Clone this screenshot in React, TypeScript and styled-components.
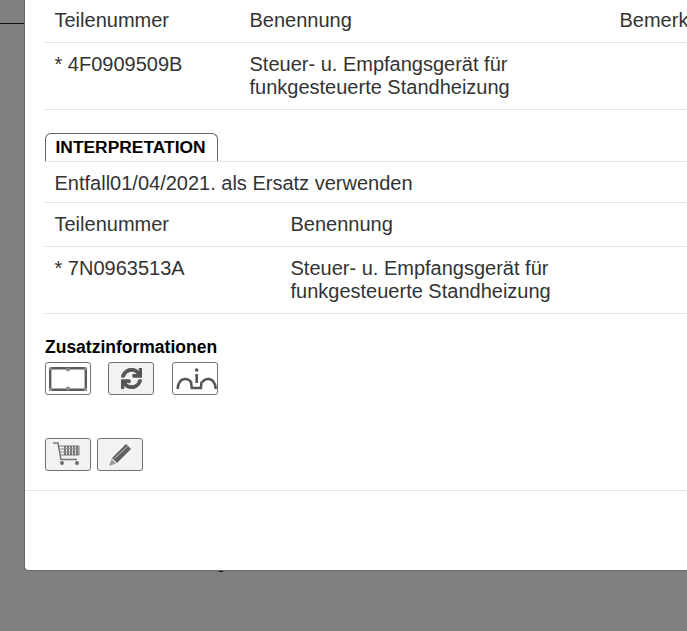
import React from "react";
import styled, { createGlobalStyle } from "styled-components";
import { FaSync } from "react-icons/fa";

const GlobalStyle = createGlobalStyle`
  html, body {
    margin: 0;
    padding: 0;
    height: 100%;
    overflow: hidden;
    background: #808080;
    font-family: "Liberation Sans", Arial, sans-serif;
  }
`;

const Backdrop = styled.div`
  position: relative;
  height: 631px;
  overflow: hidden;
  background: #808080;
`;

const TopBar = styled.div`
  height: 23px;
  border-bottom: 1px solid #111;
`;

const HiddenText = styled.div`
  padding: 527px 0 0 216px;
  font-size: 18px;
  line-height: 22px;
  color: #111;
`;

const Modal = styled.div`
  position: absolute;
  left: 25px;
  top: 0;
  width: 760px;
  height: 571px;
  box-sizing: border-box;
  padding: 0 0 0 20px;
  background: #fff;
  border-left: 1px solid #666;
  border-bottom: 1px solid #666;
  margin-left: -1px;
  border-bottom-left-radius: 5px;
  color: #333;
`;

const Table = styled.div`
  display: flex;
  flex-direction: column;
`;

const Row = styled.div<{ $first: string; $second: string; $height: number; $top: number }>`
  display: grid;
  grid-template-columns: ${(p) => p.$first} ${(p) => p.$second} 1fr;
  height: ${(p) => p.$height}px;
  box-sizing: border-box;
  padding: ${(p) => p.$top}px 0 0 9.5px;
  border-bottom: 1px solid #e3e3e3;
  font-size: 20px;
  line-height: 23px;
`;

const Tab = styled.div`
  width: 173px;
  height: 28px;
  box-sizing: border-box;
  margin: 23px 0 0 0;
  padding-left: 9.5px;
  border: 1px solid #666;
  border-bottom: none;
  border-radius: 6px 6px 0 0;
  font-size: 17.4px;
  font-weight: 700;
  line-height: 26px;
  color: #000;
`;

const TabPanel = styled.div`
  border-top: 1px solid #e3e3e3;
`;

const Note = styled.div`
  height: 41px;
  box-sizing: border-box;
  padding: 10px 0 0 9.5px;
  border-bottom: 1px solid #e3e3e3;
  font-size: 20px;
  line-height: 23px;
`;

const SectionTitle = styled.div`
  margin-top: 23px;
  font-size: 17.5px;
  font-weight: 700;
  line-height: 20px;
  color: #000;
`;

const ButtonRow = styled.div<{ $gap: number; $top: number }>`
  display: flex;
  gap: ${(p) => p.$gap}px;
  margin-top: ${(p) => p.$top}px;
`;

const IconButton = styled.button<{ $active?: boolean }>`
  width: 46px;
  height: 33px;
  padding: 0;
  display: flex;
  align-items: center;
  justify-content: center;
  box-sizing: border-box;
  background: ${(p) => (p.$active ? "#fff" : "#f1f3f2")};
  border: 1px solid #707070;
  border-radius: 3px;
  color: #555;
`;

const Divider = styled.div`
  margin: 19px 0 0 -20px;
  border-top: 1px solid #e3e3e3;
`;

const FrameIcon = () => (
  <svg width="38" height="24" viewBox="0 0 38 24">
    <rect x="1.200" y="1.200" width="35.600" height="21.600" rx="1" fill="none" stroke="#5a5a5a" strokeWidth="2.400" />
    <g fill="#8a8a8a">
      <circle cx="1.700" cy="1.700" r="1.700" />
      <circle cx="36.300" cy="1.700" r="1.700" />
      <circle cx="1.700" cy="22.300" r="1.700" />
      <circle cx="36.300" cy="22.300" r="1.700" />
      <circle cx="19" cy="2.500" r="2" />
      <circle cx="19" cy="21.500" r="2" />
    </g>
  </svg>
);

const AxleInfoIcon = () => (
  <svg width="44" height="31" viewBox="1 1 44 31" fill="none" stroke="#555" strokeWidth="2.500">
    <path d="M5.700 27c0-5.800 3.300-10 7.500-10 2.500 0 4.500 1.100 5.800 3" />
    <path d="M43.700 27c0-5.800-3.300-10-7.500-10-2.500 0-4.500 1.100-5.800 3" />
    <path d="M19 19.500l.7 6.500h9.200l.7-6.500" />
    <path d="M24.700 12v9" strokeWidth="2.600" />
    <circle cx="24.700" cy="8" r="1.800" fill="#555" stroke="none" />
  </svg>
);

const CartIcon = () => (
  <svg width="32" height="28" viewBox="0 0 32 28" fill="none" stroke="#777">
    <path d="M1 2h5l3 16.500h16" strokeWidth="1.500" />
    <path d="M7 5h20v9H9" strokeWidth="1" />
    <path d="M13 5v9M16 5v9M19 5v9M22 5v9M25 5v9" stroke="#666" strokeWidth="1.700" />
    <path d="M8 8h19M8.500 11h18.500" stroke="#888" strokeWidth="1" />
    <circle cx="10" cy="22" r="1.900" fill="#666" stroke="none" />
    <circle cx="25" cy="22" r="1.900" fill="#666" stroke="none" />
  </svg>
);

const PencilIcon = () => (
  <svg width="26" height="26" viewBox="0 0 26 26" fill="#5f5f5f">
    <path d="M19 2l5 5L10 21l-5-5z" />
    <path d="M4.500 17l4.500 4.500L2 24z" fill="#999" />
    <path d="M7.500 16.500L20.500 4.500" stroke="#f1f3f2" strokeWidth="0.700" fill="none" />
  </svg>
);

export default function App() {
  return (
    <>
      <GlobalStyle />
      <Backdrop>
        <TopBar />
        <HiddenText>g</HiddenText>
        <Modal>
          <Table>
            <Row $first="195px" $second="370px" $height={43} $top={9}>
              <span>Teilenummer</span>
              <span>Benennung</span>
              <span>Bemerkung</span>
            </Row>
            <Row $first="195px" $second="370px" $height={67} $top={10}>
              <span>* 4F0909509B</span>
              <span>
                Steuer- u. Empfangsgerät für
                <br />
                funkgesteuerte Standheizung
              </span>
            </Row>
          </Table>
          <Tab>INTERPRETATION</Tab>
          <TabPanel>
            <Note>Entfall01/04/2021. als Ersatz verwenden</Note>
            <Table>
              <Row $first="236px" $second="370px" $height={44} $top={10}>
                <span>Teilenummer</span>
                <span>Benennung</span>
              </Row>
              <Row $first="236px" $second="370px" $height={67} $top={10}>
                <span>* 7N0963513A</span>
                <span>
                  Steuer- u. Empfangsgerät für
                  <br />
                  funkgesteuerte Standheizung
                </span>
              </Row>
            </Table>
          </TabPanel>
          <SectionTitle>Zusatzinformationen</SectionTitle>
          <ButtonRow $gap={17.4} $top={5}>
            <IconButton $active aria-label="Rahmen">
              <FrameIcon />
            </IconButton>
            <IconButton aria-label="Aktualisieren">
              <FaSync size={21} stroke="currentColor" strokeWidth={24} />
            </IconButton>
            <IconButton $active aria-label="Info">
              <AxleInfoIcon />
            </IconButton>
          </ButtonRow>
          <ButtonRow $gap={6} $top={43}>
            <IconButton aria-label="Warenkorb">
              <CartIcon />
            </IconButton>
            <IconButton aria-label="Bearbeiten">
              <PencilIcon />
            </IconButton>
          </ButtonRow>
          <Divider />
        </Modal>
      </Backdrop>
    </>
  );
}
